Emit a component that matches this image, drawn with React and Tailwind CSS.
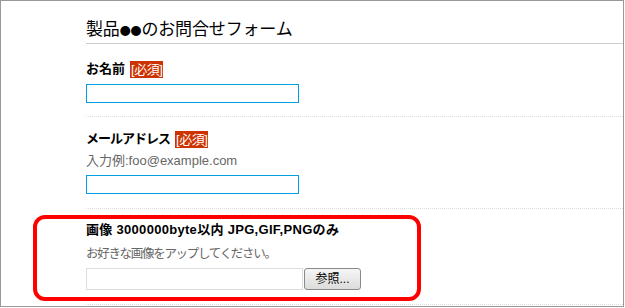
import React from "react";

const jp = { fontFamily: '"Liberation Sans", "Noto Sans CJK JP", "Noto Sans", sans-serif' };
const cjk = { fontFamily: '"Noto Sans CJK JP", "Noto Sans", sans-serif' };

function Badge() {
  return (
    <span className="ml-[5px] inline-block bg-[#cc3300] px-[1px] text-[13px] font-normal leading-[17px] tracking-[-0.5px] text-white">
      [必須]
    </span>
  );
}

export default function App() {
  return (
    <div className="bg-white w-[625px] h-[308px]" style={jp}>
      <div className="relative w-[624px] h-[307px] border border-[#999] overflow-hidden">
        <div className="pl-[85px]">
          <div className="h-[43px] border-b border-[#ccc] flex items-end pb-[2px]">
            <h1 className="text-[17px] leading-[22px] text-black font-normal tracking-[-0.15px]" style={cjk}>
              製品<span className="text-[11px]">●●</span>のお問合せフォーム
            </h1>
          </div>

          <div className="pt-[16px] pb-[13px] border-b border-dotted border-[#ddd]">
            <div className="flex items-center h-[18px] text-[13px] font-bold text-black">
              お名前<Badge />
            </div>
            <div className="mt-[6px] w-[213px] h-[19px] border border-[#00a0e0]" />
          </div>

          <div className="pt-[13px] pb-[14px] border-b border-dotted border-[#ddd]">
            <div className="flex items-center h-[18px] text-[13px] font-bold text-black">
              <span className="tracking-[-1px]">メールアドレス</span><Badge />
            </div>
            <div className="mt-[4px] h-[18px] leading-[18px] text-[13px] text-[#666]">
              入力例:foo@example.com
            </div>
            <div className="mt-[5px] w-[213px] h-[19px] border border-[#00a0e0]" />
          </div>

          <div className="pt-[12px] pb-[14px] border-b border-dotted border-[#ddd]">
            <div className="h-[18px] leading-[18px] text-[13px] font-bold text-black tracking-[0.3px]">
              画像 3000000byte以内 JPG,GIF,PNGのみ
            </div>
            <div className="mt-[6px] h-[18px] leading-[18px] text-[12.5px] tracking-[-1.3px] text-[#666]">
              お好きな画像をアップしてください。
            </div>
            <div className="mt-[5px] flex items-stretch h-[22px]">
              <div className="w-[217px] border border-[#ddd] bg-white" />
              <button className="ml-[1px] w-[57px] rounded-[3px] border border-[#8a8a8a] bg-gradient-to-b from-[#f6f6f6] to-[#dcdcdc] text-[12px] leading-[18px] text-black">
                参照...
              </button>
            </div>
          </div>
        </div>

        <div className="absolute left-[32px] top-[214px] w-[388px] h-[86px] border-[4px] border-[#ff0000] rounded-[12px] pointer-events-none" />
      </div>
    </div>
  );
}
